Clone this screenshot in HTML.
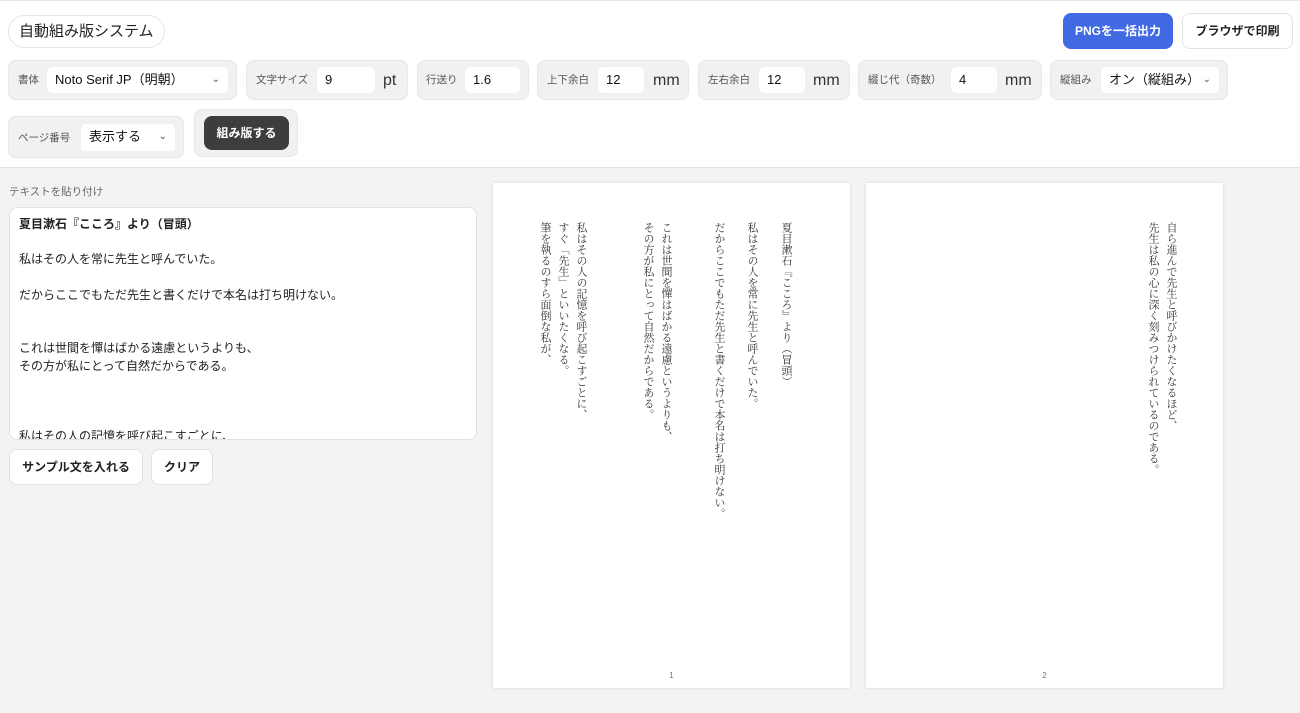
<!DOCTYPE html>
<html><head><meta charset="utf-8"><style>
*{box-sizing:border-box;margin:0;padding:0}
body{width:1300px;height:713px;overflow:hidden;background:#f3f3f3;font-family:"Liberation Sans","Noto Sans CJK JP",sans-serif;color:#222;position:relative}
.hdr{position:absolute;left:0;top:0;width:1300px;height:168px;background:#fff;border-top:1px solid #e6e6e6;border-bottom:1px solid #e2e2e2}
.abs{position:absolute}
.title{left:8px;top:14px;height:33px;padding:0 10px;border:1px solid #e4e4e4;border-radius:17px;font-size:15px;line-height:31px;background:#fff}
.btn{border-radius:8px;font-size:12px;font-weight:bold;text-align:center}
.grp{background:#f1f1f1;border:1px solid #e6e6e6;border-radius:8px;height:40px;top:59px}
.grp .lab{position:absolute;top:12px;font-size:10.5px;line-height:14px;color:#555}
.inp{position:absolute;top:6px;height:26px;background:#fff;border-radius:5px;font-size:13px;line-height:26px;padding-left:8px;color:#111}
.unit{position:absolute;top:10px;font-size:16px;line-height:20px;color:#333}
.chev{position:absolute;right:8px;top:0;font-size:10px;color:#555}
.page{position:absolute;top:183px;width:357px;height:505px;background:#fff;box-shadow:0 0 3px rgba(0,0,0,.12)}
.col{position:absolute;top:39px;writing-mode:vertical-rl;font-family:"Liberation Serif","Noto Serif CJK JP","Noto Serif CJK SC",serif;font-size:11px;line-height:17px;color:#333;letter-spacing:0;white-space:nowrap}
.pn{position:absolute;bottom:8px;width:100%;text-align:center;font-size:8px;color:#777}
</style></head><body>
<div class="hdr">
<div class="abs title">自動組み版システム</div>
<div class="abs btn" style="left:1063px;top:12px;width:110px;height:36px;line-height:36px;background:#4169e1;color:#fff">PNGを一括出力</div>
<div class="abs btn" style="left:1182px;top:12px;width:111px;height:36px;line-height:34px;background:#fff;border:1px solid #e2e2e2">ブラウザで印刷</div>

<div class="abs grp" style="left:8px;width:229px"><span class="lab" style="left:9px">書体</span><div class="inp" style="left:38px;width:181px">Noto Serif JP（明朝）<span class="chev" style="line-height:26px">⌄</span></div></div>
<div class="abs grp" style="left:246px;width:162px"><span class="lab" style="left:9px">文字サイズ</span><div class="inp" style="left:70px;width:58px">9</div><span class="unit" style="left:136px">pt</span></div>
<div class="abs grp" style="left:417px;width:112px"><span class="lab" style="left:8px">行送り</span><div class="inp" style="left:47px;width:55px">1.6</div></div>
<div class="abs grp" style="left:537px;width:152px"><span class="lab" style="left:9px">上下余白</span><div class="inp" style="left:60px;width:46px">12</div><span class="unit" style="left:115px">mm</span></div>
<div class="abs grp" style="left:698px;width:152px"><span class="lab" style="left:9px">左右余白</span><div class="inp" style="left:60px;width:46px">12</div><span class="unit" style="left:114px">mm</span></div>
<div class="abs grp" style="left:858px;width:184px"><span class="lab" style="left:9px">綴じ代（奇数）</span><div class="inp" style="left:92px;width:46px">4</div><span class="unit" style="left:146px">mm</span></div>
<div class="abs grp" style="left:1050px;width:178px"><span class="lab" style="left:9px">縦組み</span><div class="inp" style="left:50px;width:118px">オン（縦組み）<span class="chev" style="line-height:26px">⌄</span></div></div>

<div class="abs grp" style="left:8px;top:115px;width:176px;height:42px"><span class="lab" style="left:9px;top:14px">ページ番号</span><div class="inp" style="left:72px;top:7px;width:94px;height:27px">表示する<span class="chev" style="line-height:26px">⌄</span></div></div>
<div class="abs grp" style="left:194px;top:108px;width:104px;height:48px"><div class="abs btn" style="left:9px;top:6px;width:85px;height:34px;line-height:34px;background:#3d3d3d;color:#fff">組み版する</div></div>
</div>

<div class="abs" style="left:9px;top:184px;font-size:10.5px;color:#666">テキストを貼り付け</div>
<div class="abs" style="left:9px;top:207px;width:468px;height:233px;background:#fff;border:1px solid #e2e2e2;border-radius:8px;overflow:hidden;padding:8px 9px;font-size:12px;line-height:17.7px;white-space:pre;color:#222"><b>夏目漱石『こころ』より（冒頭）</b>

私はその人を常に先生と呼んでいた。

だからここでもただ先生と書くだけで本名は打ち明けない。


これは世間を憚はばかる遠慮というよりも、
その方が私にとって自然だからである。



私はその人の記憶を呼び起こすごとに、</div>
<div class="abs btn" style="left:9px;top:449px;width:134px;height:36px;line-height:34px;background:#fff;border:1px solid #e2e2e2">サンプル文を入れる</div>
<div class="abs btn" style="left:151px;top:449px;width:62px;height:36px;line-height:34px;background:#fff;border:1px solid #e2e2e2">クリア</div>

<div class="page" style="left:493px">
<div class="col" style="left:284px">夏目漱石『こころ』より（冒頭）</div>
<div class="col" style="left:250px">私はその人を常に先生と呼んでいた。</div>
<div class="col" style="left:217px">だからここでもただ先生と書くだけで本名は打ち明けない。</div>
<div class="col" style="left:164px">これは世間を憚はばかる遠慮というよりも、</div>
<div class="col" style="left:146px">その方が私にとって自然だからである。</div>
<div class="col" style="left:79px">私はその人の記憶を呼び起こすごとに、</div>
<div class="col" style="left:61px">すぐ「先生」といいたくなる。</div>
<div class="col" style="left:43px">筆を執るのすら面倒な私が、</div>
<div class="pn">1</div>
</div>
<div class="page" style="left:866px">
<div class="col" style="left:296px">自ら進んで先生と呼びかけたくなるほど、</div>
<div class="col" style="left:278px">先生は私の心に深く刻みつけられているのである。</div>
<div class="pn">2</div>
</div>
</body></html>
